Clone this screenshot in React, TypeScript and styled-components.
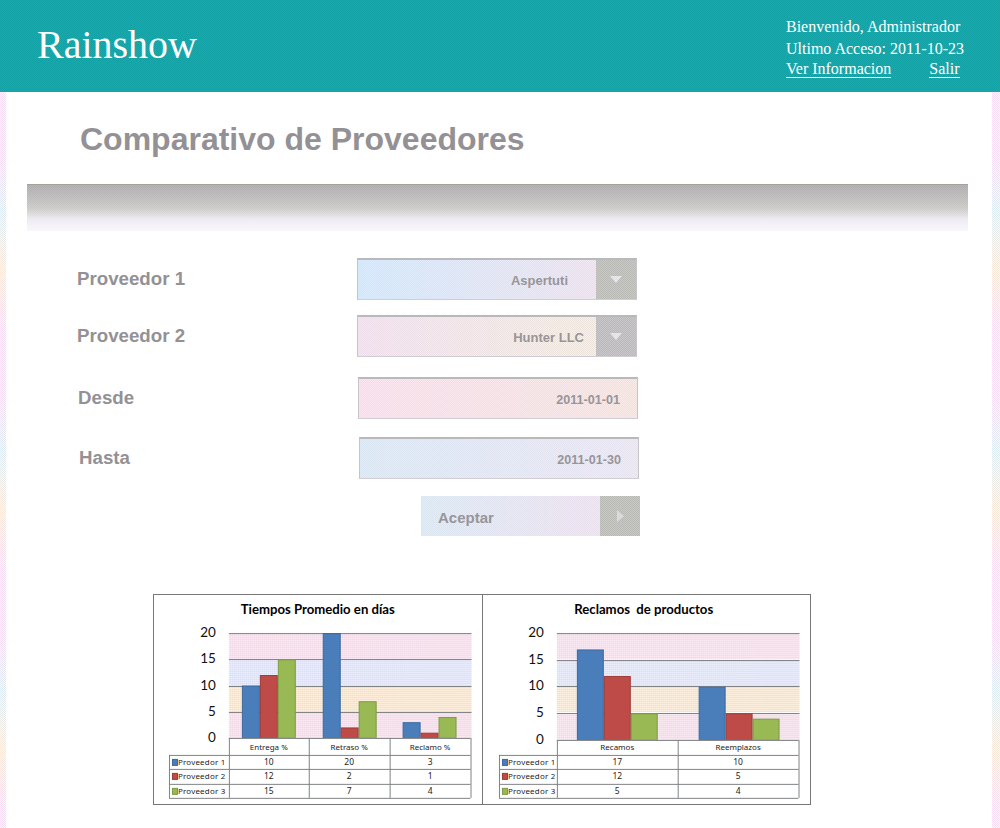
import React from "react";
import styled, { createGlobalStyle, css } from "styled-components";

const GlobalStyle = createGlobalStyle`
  html, body {
    margin: 0;
    padding: 0;
    background: #fff;
  }
  body {
    font-family: "Liberation Sans", Arial, sans-serif;
  }
`;

// the source image was saved as a dithered gif, this fakes the pattern
const checker = (tone: string, size = 2) => css`
  repeating-conic-gradient(${tone} 0 25%, transparent 0 50%) 0 0 / ${size}px ${size}px
`;

const tinted = (left: string, right: string) => css`
  ${checker("rgba(208, 206, 214, 0.35)")}, linear-gradient(90deg, ${left}, ${right})
`;

const Page = styled.div`
  width: 1000px;
  height: 828px;
  overflow: hidden;
  display: flex;
  flex-direction: column;
`;

const Header = styled.header`
  height: 92px;
  flex: none;
  display: flex;
  justify-content: space-between;
  background: ${checker("#28a3a8")}, #12a2a6;
  color: #fff;
  font-family: "Liberation Serif", "Times New Roman", serif;
`;

const Logo = styled.div`
  margin: 22px 0 0 37px;
  font-size: 40px;
  line-height: 46px;
`;

const UserBox = styled.div`
  width: 214px;
  padding-top: 16px;
  font-size: 16px;
  line-height: 21px;
`;

const AccessLine = styled.div`
  margin-top: 1px;
`;

const UserLinks = styled.div`
  display: flex;
  gap: 38px;
`;

const HeaderLink = styled.a`
  color: #fff;
  text-decoration: none;
  border-bottom: 1px solid #fff;
  line-height: 17px;
  height: 17px;
  margin-top: 1px;
`;

const Body = styled.div`
  flex: 1;
  display: flex;
  min-height: 0;
`;

const SideStrip = styled.div<{ $w: number }>`
  width: ${(p) => p.$w}px;
  flex: none;
  background: ${checker("rgba(255, 255, 255, 0.75)")},
    repeating-linear-gradient(180deg, #fbdcf5 0 60px, #dcecf5 120px, #fbe8d8 180px, #fbdcf5 240px);
`;

const Content = styled.main`
  flex: 1;
  min-width: 0;
  padding: 0 24px 0 21px;
`;

const Title = styled.h1`
  margin: 0;
  padding: 29px 0 0 53px;
  height: 64px;
  box-sizing: border-box;
  font-size: 32px;
  line-height: 36px;
  font-weight: bold;
  color: #939195;
`;

const TitleBand = styled.div`
  height: 47px;
  margin-top: 28px;
  border-top: 1px solid #a3a29d;
  box-sizing: border-box;
  background: ${checker("rgba(255, 255, 255, 0.12)")},
    linear-gradient(180deg, #aeaaad 0%, #c9c9c5 50%, #eeeaf2 75%, #f9f6fb 100%);
`;

const Form = styled.form`
  display: flex;
  flex-direction: column;
  margin-top: 27px;
`;

const Row = styled.div<{ $top: number; $shift: number }>`
  display: flex;
  align-items: center;
  height: 42px;
  margin-top: ${(p) => p.$top}px;
  padding-left: ${(p) => p.$shift}px;
`;

const Label = styled.label`
  width: 280px;
  flex: none;
  font-size: 18.7px;
  font-weight: bold;
  color: #939195;
`;

const Field = styled.div<{ $left: string; $right: string }>`
  width: 280px;
  height: 42px;
  box-sizing: border-box;
  display: flex;
  border: 1px solid #c6c4c8;
  border-top: 2px solid #b9b8ba;
  border-bottom-color: #d0cdd4;
  background: ${(p) => tinted(p.$left, p.$right)};
`;

const FieldText = styled.span<{ $pad: number; $size?: number }>`
  flex: 1;
  align-self: center;
  padding: 2px ${(p) => p.$pad}px 0 0;
  text-align: right;
  font-size: ${(p) => p.$size ?? 13}px;
  font-weight: bold;
  color: #989599;
`;

const ArrowBox = styled.span`
  width: 40px;
  flex: none;
  display: flex;
  align-items: center;
  justify-content: center;
  background: ${checker("#c9c7ca")}, #b9b9b5;
`;

const Submit = styled.button`
  display: flex;
  width: 219px;
  height: 40px;
  margin: 17px 0 0 394px;
  padding: 0;
  border: 0;
  background: ${tinted("#dcf0fc", "#fbe4f6")};
  font-family: inherit;
`;

const SubmitText = styled.span`
  flex: 1;
  align-self: center;
  padding: 3px 0 0 17px;
  text-align: left;
  font-size: 15px;
  font-weight: bold;
  color: #989599;
`;

const SubmitArrow = styled(ArrowBox)`
  margin-left: 1px;
`;

const Charts = styled.section`
  display: flex;
  width: 658px;
  height: 211px;
  margin: 58px 0 0 126px;
  box-sizing: border-box;
  border: 1px solid #77777b;
`;

const ChartPanel = styled.div`
  width: 50%;
  & + & {
    border-left: 1px solid #77777b;
  }
`;

const ChartSvg = styled.svg`
  display: block;
  width: 100%;
  height: 100%;
`;

const SERIES = [
  { name: "Proveedor 1", fill: "#4a7ebb", line: "#3a679e" },
  { name: "Proveedor 2", fill: "#be4b48", line: "#9c3a38" },
  { name: "Proveedor 3", fill: "#98b954", line: "#7d9a42" },
];

type ChartSpec = {
  id: string;
  title: string;
  titleX: number;
  plot: { left: number; right: number; bottom: number };
  gridY: number[];
  labelLeft: number;
  columns: number[];
  categories: string[];
  values: number[][];
  groups: number[];
  barW: number;
  unit: number;
};

const CHARTS: ChartSpec[] = [
  {
    id: "tiempos",
    title: "Tiempos Promedio en días",
    titleX: 164,
    plot: { left: 75, right: 318, bottom: 143 },
    gridY: [38, 64, 91, 117],
    labelLeft: 15,
    columns: [75, 155, 236, 317],
    categories: ["Entrega %", "Retraso %", "Reclamo %"],
    values: [
      [10, 20, 3],
      [12, 2, 1],
      [15, 7, 4],
    ],
    groups: [88, 169, 249],
    barW: 18,
    unit: 5.25,
  },
  {
    id: "reclamos",
    title: "Reclamos  de productos",
    titleX: 161,
    plot: { left: 74, right: 317, bottom: 145 },
    gridY: [38, 65, 91, 118],
    labelLeft: 16,
    columns: [74, 195, 316],
    categories: ["Recamos", "Reemplazos"],
    values: [
      [17, 10],
      [12, 5],
      [5, 4],
    ],
    groups: [94, 216],
    barW: 27,
    unit: 5.33,
  },
];

const ROW_Y = [160, 174, 189, 203];

function Chart({ spec }: { spec: ChartSpec }) {
  const { plot, gridY, columns, labelLeft } = spec;
  const tableRight = columns[columns.length - 1];
  const lineColor = "#808284";
  const plotW = plot.right - plot.left;
  return (
    <ChartSvg viewBox="0 0 328 209">
      <defs>
        <pattern id={`dither-${spec.id}`} width="2" height="2" patternUnits="userSpaceOnUse">
          <rect width="1" height="1" fill="#d8d8d8" fillOpacity="0.5" />
          <rect x="1" y="1" width="1" height="1" fill="#ffffff" fillOpacity="0.4" />
        </pattern>
      </defs>
      <text x={spec.titleX} y={19} textAnchor="middle" fontFamily="Lato, sans-serif" fontWeight="700" fontSize="13.2" fill="#000" xmlSpace="preserve">
        {spec.title}
      </text>
      {/* pastel bands of the plot area */}
      <rect x={plot.left} y={gridY[0]} width={plotW} height={26} fill="#f8e0ee" />
      <rect x={plot.left} y={gridY[1]} width={plotW} height={27} fill="#e2e6fa" />
      <rect x={plot.left} y={gridY[2]} width={plotW} height={26} fill="#fae8d2" />
      <rect x={plot.left} y={gridY[3]} width={plotW} height={plot.bottom - gridY[3]} fill="#f7e0ec" />
      <rect x={plot.left} y={gridY[0]} width={plotW} height={plot.bottom - gridY[0]} fill={`url(#dither-${spec.id})`} />
      {gridY.map((y) => (
        <line key={y} x1={plot.left} x2={plot.right} y1={y + 0.5} y2={y + 0.5} stroke={lineColor} />
      ))}
      {[20, 15, 10, 5, 0].map((v, i) => (
        <text
          key={v}
          x={plot.left - 13}
          y={(i < 4 ? gridY[i] : plot.bottom) + 4}
          textAnchor="end"
          fontFamily="Lato, sans-serif"
          fontSize="13.5"
          fill="#111"
        >
          {v}
        </text>
      ))}
      {spec.values.map((row, s) =>
        row.map((v, g) => {
          const h = v * spec.unit;
          return (
            <rect
              key={`${s}-${g}`}
              x={spec.groups[g] + s * spec.barW + 0.5}
              y={plot.bottom - h + 0.5}
              width={spec.barW - 1}
              height={h - 0.5}
              fill={SERIES[s].fill}
              stroke={SERIES[s].line}
            />
          );
        })
      )}
      {/* data table below the plot */}
      <rect x={plot.left} y={plot.bottom} width={tableRight - plot.left} height={ROW_Y[0] - plot.bottom} fill="#fff" />
      <line x1={plot.left} x2={tableRight} y1={plot.bottom + 0.5} y2={plot.bottom + 0.5} stroke={lineColor} />
      {ROW_Y.map((y) => (
        <line key={y} x1={labelLeft} x2={tableRight} y1={y + 0.5} y2={y + 0.5} stroke={lineColor} />
      ))}
      <line x1={labelLeft + 0.5} x2={labelLeft + 0.5} y1={ROW_Y[0]} y2={ROW_Y[3]} stroke={lineColor} />
      {columns.map((x) => (
        <line key={x} x1={x + 0.5} x2={x + 0.5} y1={plot.bottom} y2={ROW_Y[3]} stroke={lineColor} />
      ))}
      {spec.categories.map((c, i) => (
        <text
          key={c}
          x={(columns[i] + columns[i + 1]) / 2}
          y={155}
          textAnchor="middle"
          fontFamily="'Noto Sans', sans-serif"
          fontSize="8"
          fill="#222"
        >
          {c}
        </text>
      ))}
      {SERIES.map((s, r) => (
        <g key={s.name}>
          <rect x={labelLeft + 3.5} y={ROW_Y[r] + 4.5} width={5} height={6} fill={s.fill} stroke={s.line} />
          <text x={labelLeft + 9} y={ROW_Y[r] + 10.5} fontFamily="'Noto Sans', sans-serif" fontSize="8" letterSpacing="0.2" fill="#222">
            {s.name}
          </text>
          {spec.values[r].map((v, i) => (
            <text
              key={i}
              x={(columns[i] + columns[i + 1]) / 2}
              y={ROW_Y[r] + 10.5}
              textAnchor="middle"
              fontFamily="'Noto Sans', sans-serif"
              fontSize="8.5"
              fill="#222"
            >
              {v}
            </text>
          ))}
        </g>
      ))}
    </ChartSvg>
  );
}

function DownArrow() {
  return (
    <svg width="14" height="7" viewBox="0 0 14 7">
      <path d="M1 0h12L7 7z" fill="#e6e4e6" />
    </svg>
  );
}

function RightArrow() {
  return (
    <svg width="7" height="12" viewBox="0 0 7 12">
      <path d="M0 0l7 6-7 6z" fill="#dcdadc" />
    </svg>
  );
}

export default function App() {
  return (
    <Page>
      <GlobalStyle />
      <Header>
        <Logo>Rainshow</Logo>
        <UserBox>
          <div>Bienvenido, Administrador</div>
          <AccessLine>Ultimo Acceso: 2011-10-23</AccessLine>
          <UserLinks>
            <HeaderLink>Ver Informacion</HeaderLink>
            <HeaderLink>Salir</HeaderLink>
          </UserLinks>
        </UserBox>
      </Header>
      <Body>
        <SideStrip $w={6} />
        <Content>
          <Title>Comparativo de Proveedores</Title>
          <TitleBand />
          <Form>
            <Row $top={0} $shift={50}>
              <Label>Proveedor 1</Label>
              <Field $left="#daedff" $right="#f6e8f2">
                <FieldText $pad={28}>Aspertuti</FieldText>
                <ArrowBox>
                  <DownArrow />
                </ArrowBox>
              </Field>
            </Row>
            <Row $top={15} $shift={50}>
              <Label>Proveedor 2</Label>
              <Field $left="#fce4f4" $right="#faf3da">
                <FieldText $pad={12}>Hunter LLC</FieldText>
                <ArrowBox>
                  <DownArrow />
                </ArrowBox>
              </Field>
            </Row>
            <Row $top={20} $shift={51}>
              <Label>Desde</Label>
              <Field $left="#fde6f2" $right="#f9ebe8">
                <FieldText $pad={17} $size={12.6}>2011-01-01</FieldText>
              </Field>
            </Row>
            <Row $top={18} $shift={52}>
              <Label>Hasta</Label>
              <Field $left="#dcefff" $right="#f0ecfa">
                <FieldText $pad={17} $size={12.6}>2011-01-30</FieldText>
              </Field>
            </Row>
            <Submit type="button">
              <SubmitText>Aceptar</SubmitText>
              <SubmitArrow>
                <RightArrow />
              </SubmitArrow>
            </Submit>
          </Form>
          <Charts>
            {CHARTS.map((spec) => (
              <ChartPanel key={spec.id}>
                <Chart spec={spec} />
              </ChartPanel>
            ))}
          </Charts>
        </Content>
        <SideStrip $w={8} />
      </Body>
    </Page>
  );
}
